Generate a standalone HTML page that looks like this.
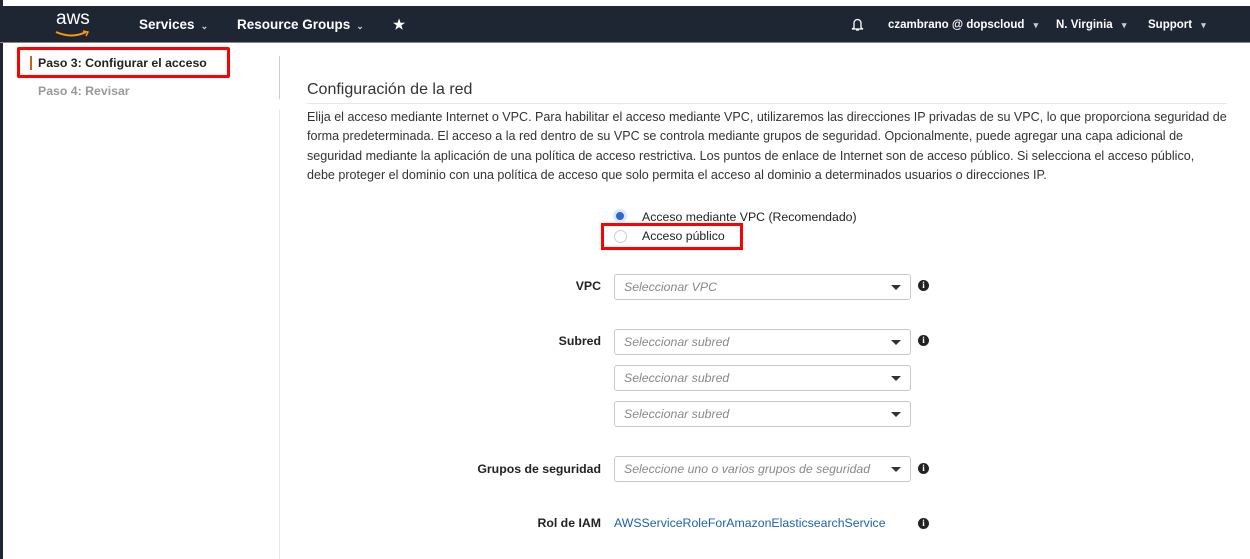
<!DOCTYPE html>
<html><head><meta charset="utf-8"><style>
*{margin:0;padding:0;box-sizing:border-box}
body{width:1250px;height:559px;overflow:hidden;background:#fff;font-family:"Liberation Sans",Arial,sans-serif;position:relative;color:#333}
.a{position:absolute;white-space:nowrap}
#nav{position:absolute;left:0;top:6px;width:1250px;height:37px;background:#1f2633;border-bottom:1px solid #888}
.nt{position:absolute;top:11px;color:#fff;font-weight:bold;font-size:13.5px}
.sm{font-size:11.5px;top:13px}
.car{font-size:9px;color:#ccc;margin-left:6px}
.lbl{position:absolute;font-weight:bold;font-size:12.3px;color:#222;text-align:right;width:200px}
.sel{position:absolute;left:614px;width:297px;height:26px;border:1px solid #c8c8c8;border-radius:3px;font-style:italic;color:#888;font-size:12.3px;padding:5px 9px}
.sel:after{content:"";position:absolute;right:9px;top:10px;border-left:5px solid transparent;border-right:5px solid transparent;border-top:5px solid #333}
.inf{position:absolute;left:918px;width:11px;height:11px;border-radius:50%;background:#222;color:#fff;font-size:9px;font-weight:bold;text-align:center;line-height:11px;font-family:"Liberation Serif",serif}
p{position:absolute;left:307px;top:108px;width:940px;font-size:12.55px;line-height:19.3px;color:#333;white-space:nowrap}
</style></head><body>
<div style="position:absolute;left:0;top:0;width:3px;height:559px;background:#1f2633"></div>
<div id="nav">
<div class="a" style="left:56px;top:2px;color:#fff;font-size:19px">aws</div>
<svg class="a" style="left:54px;top:24px" width="36" height="8"><path d="M2 2 Q18 9 32 2" stroke="#f90" stroke-width="2" fill="none"/><path d="M29 1 L34 2 L32 6" stroke="#f90" stroke-width="1.5" fill="none"/></svg>
<div class="nt" style="left:139px">Services<span class="car">⌄</span></div>
<div class="nt" style="left:237px">Resource Groups<span class="car">⌄</span></div>
<div class="nt" style="left:393px">★</div>
<svg class="a" style="left:851px;top:11px" width="13" height="15"><path d="M3 11 V6 a3.5 3.5 0 0 1 7 0 V11 L12 12 H1 Z M5 13 h3" stroke="#fff" stroke-width="1.3" fill="none"/></svg>
<div class="nt sm" style="left:888px">czambrano @ dopscloud <span class="car">▾</span></div>
<div class="nt sm" style="left:1056px">N. Virginia <span class="car">▾</span></div>
<div class="nt sm" style="left:1148px">Support <span class="car">▾</span></div>
</div>
<div style="position:absolute;left:17px;top:47px;width:213px;height:31px;border:3px solid #f00;border-radius:2px"></div>
<div style="position:absolute;left:30px;top:56px;width:2px;height:14px;background:#c7641a"></div>
<div class="a" style="left:38px;top:56px;font-weight:bold;font-size:12.3px;color:#222">Paso 3: Configurar el acceso</div>
<div class="a" style="left:38px;top:84px;font-weight:bold;font-size:12.3px;color:#999">Paso 4: Revisar</div>
<div style="position:absolute;left:279px;top:56px;width:1px;height:43px;background:#ccc"></div>
<div style="position:absolute;left:279px;top:110px;width:1px;height:449px;background:#e6e6e6"></div>
<div class="a" style="left:307px;top:81px;font-size:16px;color:#333">Configuración de la red</div>
<div style="position:absolute;left:307px;top:103px;width:920px;height:1px;background:#e6e6e6"></div>
<p>Elija el acceso mediante Internet o VPC. Para habilitar el acceso mediante VPC, utilizaremos las direcciones IP privadas de su VPC, lo que proporciona seguridad de<br>forma predeterminada. El acceso a la red dentro de su VPC se controla mediante grupos de seguridad. Opcionalmente, puede agregar una capa adicional de<br>seguridad mediante la aplicación de una política de acceso restrictiva. Los puntos de enlace de Internet son de acceso público. Si selecciona el acceso público,<br>debe proteger el dominio con una política de acceso que solo permita el acceso al dominio a determinados usuarios o direcciones IP.</p>
<div style="position:absolute;left:613px;top:209px;width:14px;height:14px;border-radius:50%;background:#2a6ac9;border:3px solid #dce8f7"></div>
<div class="a" style="left:642px;top:210px;font-size:12.3px;color:#222">Acceso mediante VPC (Recomendado)</div>
<div style="position:absolute;left:601px;top:223px;width:142px;height:27px;border:3px solid #f00"></div>
<div style="position:absolute;left:614px;top:230px;width:13px;height:13px;border-radius:50%;border:1px solid #ccc"></div>
<div class="a" style="left:642px;top:229px;font-size:12.3px;color:#222">Acceso público</div>
<div class="lbl" style="left:401px;top:279px">VPC</div>
<div class="sel" style="top:274px">Seleccionar VPC</div><div class="inf" style="top:280px">i</div>
<div class="lbl" style="left:401px;top:334px">Subred</div>
<div class="sel" style="top:329px">Seleccionar subred</div><div class="inf" style="top:335px">i</div>
<div class="sel" style="top:365px">Seleccionar subred</div>
<div class="sel" style="top:401px">Seleccionar subred</div>
<div class="lbl" style="left:401px;top:462px">Grupos de seguridad</div>
<div class="sel" style="top:456px">Seleccione uno o varios grupos de seguridad</div><div class="inf" style="top:463px">i</div>
<div class="lbl" style="left:401px;top:516px">Rol de IAM</div>
<div class="a" style="left:614px;top:516px;font-size:12.3px;color:#1a62b3">AWSServiceRoleForAmazonElasticsearchService</div>
<div class="inf" style="top:518px">i</div>
</body></html>
